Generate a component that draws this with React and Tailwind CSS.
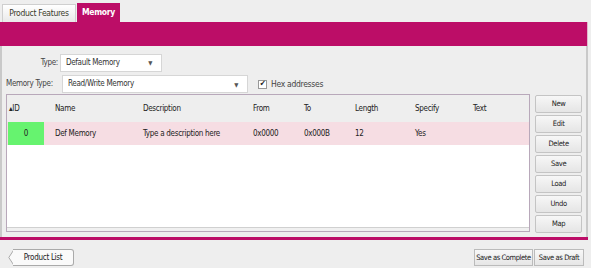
import React from 'react';

const font = { fontFamily: '"DejaVu Sans Condensed", "DejaVu Sans", sans-serif' };

const actions = ['New', 'Edit', 'Delete', 'Save', 'Load', 'Undo', 'Map'];

function Select({ value, className }) {
  return (
    <div className={`flex items-center justify-between h-[18px] bg-white border border-[#d6d6d6] pl-[5px] pr-[9px] text-[#333] ${className}`}>
      <span>{value}</span>
      <span className="text-[6px] text-[#555]">▼</span>
    </div>
  );
}

function SideButton({ label }) {
  return (
    <button className="h-[18px] w-full border border-[#c4c4c4] rounded-[2px] bg-gradient-to-b from-[#f7f7f7] to-[#e5e5e5] text-[7.5px] text-[#222]">
      {label}
    </button>
  );
}

export default function App() {
  return (
    <div className="w-[591px] h-[268px] bg-[#eeeeee] overflow-hidden text-[8px] tracking-[-0.3px] text-[#222] whitespace-nowrap" style={font}>
      <div className="w-[588px]">
        {/* Tabs */}
        <div className="flex items-end h-[22px] pl-[2px] gap-[1px]">
          <div className="h-[18px] w-[74px] flex items-center justify-center bg-gradient-to-b from-white to-[#e9e9e9] border border-[#cfcfcf] border-b-0 text-[#3a3a2a] text-[8.5px]">
            Product Features
          </div>
          <div className="h-[19px] w-[43px] flex items-center justify-center bg-[#bc0d67] text-white text-[8.5px] font-semibold">
            Memory
          </div>
        </div>
        <div className="h-[24px] bg-[#bc0d67] border-r border-[#e2b6cc]" />

        {/* Panel */}
        <div className="border-l-2 border-r-2 border-[#c9c9c9] h-[191px] px-[4px]">
          <div className="flex items-center h-[28px] pt-[5px]">
            <span className="w-[54px] text-right pr-[2px] text-[#444]">Type:</span>
            <Select value="Default Memory" className="w-[102px]" />
          </div>
          <div className="flex items-center h-[20px]">
            <span className="w-[56px] text-[#444]">Memory Type:</span>
            <Select value="Read/Write Memory" className="w-[186px]" />
            <span className="ml-[10px] w-[9px] h-[9px] border border-[#999] bg-white flex items-center justify-center text-[8px] leading-none">✔</span>
            <span className="ml-[4px] text-[#444] text-[8.5px]">Hex addresses</span>
          </div>

          <div className="flex gap-[5px]">
            <div className="w-[527px] h-[138px] border border-[#b8a8ba] bg-white flex flex-col">
              <div className="flex items-center h-[27px] bg-[#eeeeee] text-[#222]">
                <span className="w-[48px] pl-[2px]">▴ID</span>
                <span className="w-[88px]">Name</span>
                <span className="w-[110px]">Description</span>
                <span className="w-[51px]">From</span>
                <span className="w-[51px]">To</span>
                <span className="w-[60px]">Length</span>
                <span className="w-[58px]">Specify</span>
                <span>Text</span>
              </div>
              <div className="flex items-center h-[23px] bg-[#f6dde3] text-[#222]">
                <span className="w-[36px] ml-[1px] h-full bg-[#66f36f] flex items-center justify-center">0</span>
                <span className="w-[11px]" />
                <span className="w-[88px]">Def Memory</span>
                <span className="w-[110px]">Type a description here</span>
                <span className="w-[51px]">0x0000</span>
                <span className="w-[51px]">0x000B</span>
                <span className="w-[60px]">12</span>
                <span className="w-[58px]">Yes</span>
              </div>
              <div className="flex-1" />
              <div className="h-[4px] border-t border-[#d0d0d0] bg-[#f0f0f0]" />
            </div>
            <div className="w-[47px] flex flex-col gap-[2px] pt-[1px]">
              {actions.map((a) => (
                <SideButton key={a} label={a} />
              ))}
            </div>
          </div>
        </div>
        <div className="h-[3px] bg-[#bc0d67]" />

        {/* Footer */}
        <div className="flex items-center justify-between pl-[8px] pr-[4px] pt-[9px]">
          <div className="flex items-center">
            <svg width="6" height="17" viewBox="0 0 6 17" className="-mr-[1px]">
              <path d="M6 0.5 L0.8 8.5 L6 16.5" fill="#fafafa" stroke="#aaa" />
            </svg>
            <button className="h-[17px] w-[61px] border border-l-0 border-[#aaa] rounded-r-[3px] bg-[#fafafa] text-[#222]">
              Product List
            </button>
          </div>
          <div className="flex gap-[1px]">
            <button className="h-[17px] w-[59px] border border-[#bbb] bg-gradient-to-b from-[#f8f8f8] to-[#e6e6e6] text-[7.5px] tracking-[-0.4px]">Save as Complete</button>
            <button className="h-[17px] w-[50px] border border-[#bbb] bg-gradient-to-b from-[#f8f8f8] to-[#e6e6e6] text-[7.5px] tracking-[-0.4px]">Save as Draft</button>
          </div>
        </div>
      </div>
    </div>
  );
}
